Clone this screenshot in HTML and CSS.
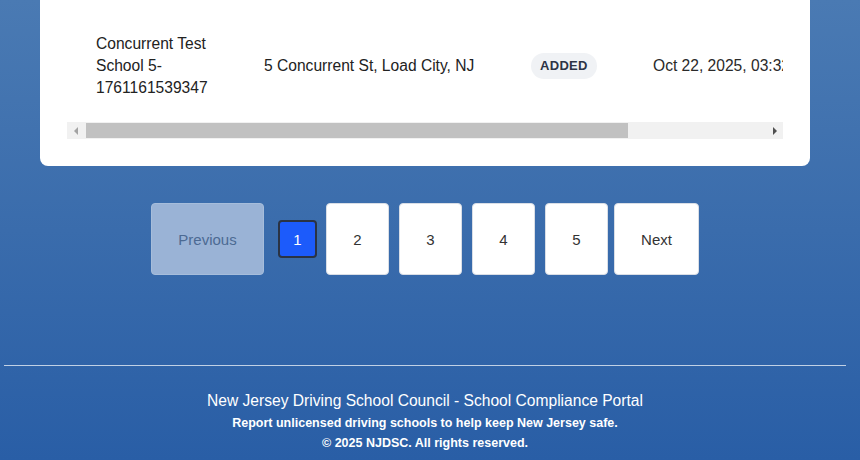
FILE: index.html
```html
<!DOCTYPE html>
<html lang="en">
<head>
<meta charset="utf-8">
<title>School Compliance Portal</title>
<link rel="stylesheet" href="styles.css">
</head>
<body>
<div class="page">
  <section class="card">
    <div class="table-wrap">
      <div class="table-clip">
        <div class="row">
          <div class="cell name">Concurrent Test School 5-1761161539347</div>
          <div class="cell addr">5 Concurrent St, Load City, NJ</div>
          <div class="cell status"><span class="badge">ADDED</span></div>
          <div class="cell date">Oct 22, 2025, 03:32 PM</div>
        </div>
      </div>
      <div class="hscroll">
        <span class="arrow arrow-left"></span>
        <div class="track"><div class="thumb"></div></div>
        <span class="arrow arrow-right"></span>
      </div>
    </div>
  </section>

  <nav class="pagination">
    <button class="pg pg-prev">Previous</button>
    <button class="pg pg-active">1</button>
    <button class="pg">2</button>
    <button class="pg">3</button>
    <button class="pg">4</button>
    <button class="pg pg-last">5</button>
    <button class="pg pg-next">Next</button>
  </nav>

  <footer class="footer">
    <hr class="footer-rule">
    <p class="footer-title">New Jersey Driving School Council - School Compliance Portal</p>
    <p class="footer-line">Report unlicensed driving schools to help keep New Jersey safe.</p>
    <p class="footer-line">© 2025 NJDSC. All rights reserved.</p>
  </footer>
</div>
</body>
</html>
```
FILE: styles.css
```css
html {
  height: 100%;
}
body {
  margin: 0;
  min-height: 100%;
  font-family: "Liberation Sans", Arial, sans-serif;
  background: linear-gradient(180deg, #4a7ab3 0%, #3a6cac 50%, #295ea6 100%);
  overflow: hidden;
}
.page {
  width: 850px;
}
.card {
  margin: -10px 40px 0;
  background: #ffffff;
  border-radius: 8px;
  padding: 24px 27px 27px;
}
.table-wrap {
  display: flex;
  flex-direction: column;
}
.table-clip {
  overflow: hidden;
}
.row {
  display: grid;
  grid-template-columns: 168px 267px 122px 300px;
  align-items: center;
  padding: 19px 0 23px 29px;
  width: 900px;
  color: #222;
  font-size: 15.6px;
  line-height: 22px;
}
.name {
  padding-right: 36px;
}
.date {
  white-space: nowrap;
  color: #2a2a2a;
}
.badge {
  display: inline-block;
  background: #f0f2f5;
  color: #2d3446;
  font-weight: bold;
  font-size: 13px;
  letter-spacing: 0.3px;
  line-height: 26px;
  padding: 0 9px;
  border-radius: 13px;
}
.hscroll {
  display: flex;
  align-items: center;
  height: 17px;
  background: #f1f1f1;
}
.arrow {
  width: 17px;
  height: 17px;
  display: flex;
  align-items: center;
  justify-content: center;
}
.arrow::before {
  content: "";
  border-top: 4px solid transparent;
  border-bottom: 4px solid transparent;
}
.arrow-left::before {
  border-right: 4px solid #a3a3a3;
}
.arrow-right::before {
  border-left: 4px solid #505050;
}
.track {
  flex: 1;
  height: 17px;
  display: flex;
  align-items: center;
}
.thumb {
  margin-left: 2px;
  width: 542px;
  height: 15px;
  background: #c1c1c1;
}
.pagination {
  margin: 37px 40px 0;
  height: 72px;
  display: flex;
  justify-content: center;
  align-items: center;
  gap: 10px;
}
.pg {
  height: 72px;
  width: 63px;
  padding: 0;
  background: #ffffff;
  border: 1px solid #d9dee6;
  border-radius: 4px;
  font-family: "Liberation Sans", Arial, sans-serif;
  font-size: 15px;
  color: #333;
}
.pg-prev {
  width: 113px;
  background: #9ab3d6;
  border-color: #a6bddb;
  color: #4c6a93;
}
.pg-active {
  width: 39px;
  height: 38px;
  margin: 0 -1px 0 4px;
  background: #1c5bfb;
  border: 2px solid #2a3344;
  color: #ffffff;
}
.pg-next {
  width: 85px;
  margin-left: -4px;
}
.footer {
  margin-top: 90px;
  color: #ffffff;
  text-align: center;
}
.footer-rule {
  margin: 0 4px;
  border: 0;
  border-top: 1px solid rgba(255, 255, 255, 0.7);
}
.footer-title {
  margin: 25px 0 2px;
  font-size: 15.6px;
  line-height: 20px;
}
.footer-line {
  margin: 0;
  font-size: 12.5px;
  font-weight: bold;
  line-height: 20px;
}
```
